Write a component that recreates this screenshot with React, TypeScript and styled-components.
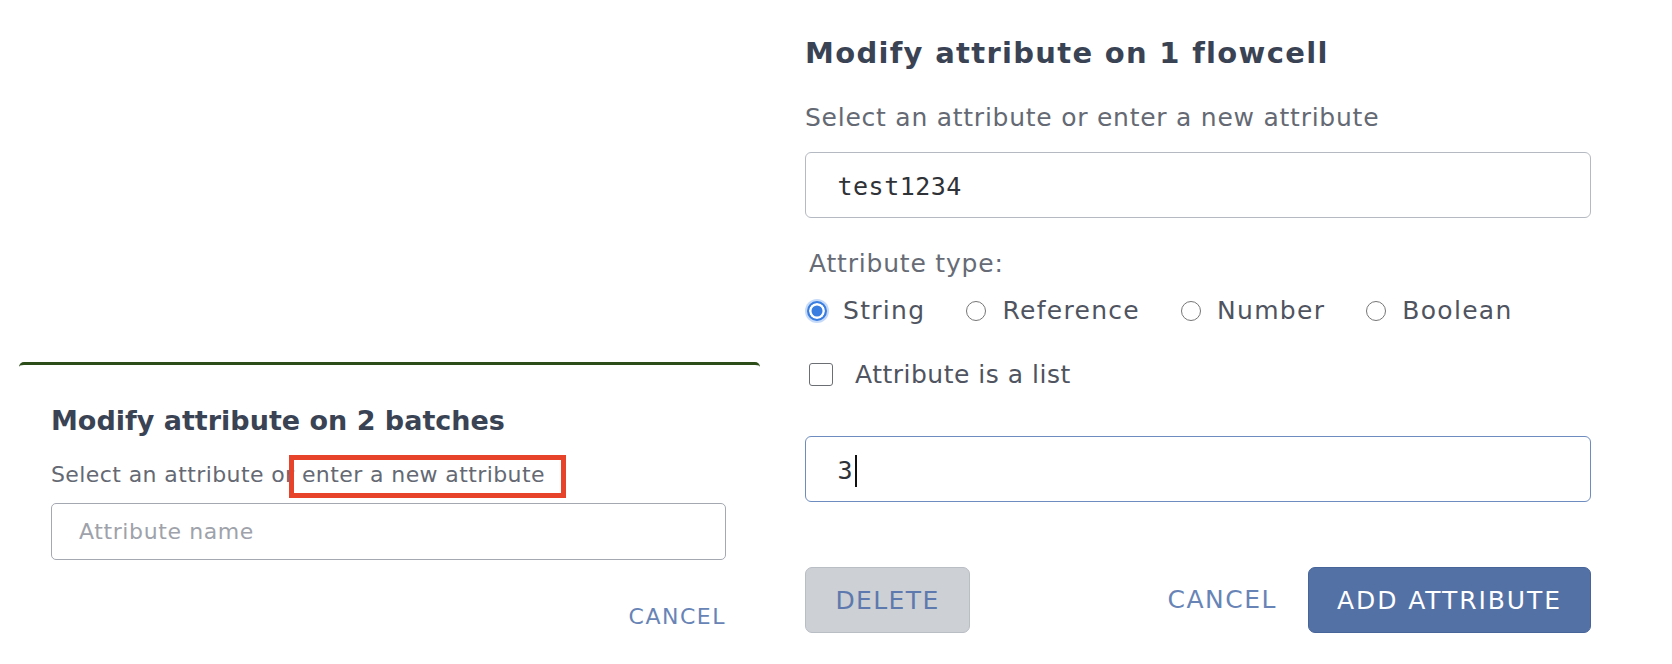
import React from "react";
import styled, { createGlobalStyle } from "styled-components";

const GlobalStyle = createGlobalStyle`
  html, body {
    margin: 0;
    padding: 0;
    background: #ffffff;
  }
  body {
    font-family: "DejaVu Sans", "Liberation Sans", sans-serif;
  }
  *, *::before, *::after {
    box-sizing: border-box;
  }
`;

const Page = styled.div`
  width: 1672px;
  height: 664px;
  display: flex;
  align-items: flex-start;
  gap: 45px;
  padding-left: 19px;
  overflow: hidden;
  background: #ffffff;
`;

/* ---------- left dialog (2 batches) ---------- */

const BatchDialog = styled.section`
  width: 741px;
  margin-top: 362px;
  border-top: 3px solid #2c4d17;
  border-radius: 5px 5px 0 0;
  padding: 39px 34px 20px 32px;
  display: flex;
  flex-direction: column;
`;

/* ---------- right dialog (1 flowcell) ---------- */

const FlowcellDialog = styled.section`
  width: 786px;
  padding-top: 35px;
  display: flex;
  flex-direction: column;
`;

const Title = styled.h2<{ $large?: boolean }>`
  margin: 0;
  font-family: "DejaVu Sans", sans-serif;
  font-weight: 700;
  color: #3a4354;
  font-size: ${(p) => (p.$large ? 29 : 27)}px;
  line-height: ${(p) => (p.$large ? 36 : 34)}px;
  letter-spacing: ${(p) => (p.$large ? 1.3 : 0)}px;
  white-space: nowrap;
`;

const Hint = styled.p<{ $large?: boolean }>`
  margin: ${(p) => (p.$large ? "31px 0 0" : "22px 0 0")};
  font-size: ${(p) => (p.$large ? 25 : 22)}px;
  line-height: ${(p) => (p.$large ? 32 : 30)}px;
  letter-spacing: ${(p) => (p.$large ? 0.75 : 0.4)}px;
  color: #646973;
  white-space: nowrap;
`;

const Highlight = styled.span`
  position: relative;
  &::after {
    content: "";
    position: absolute;
    left: -13px;
    right: -21px;
    top: -7px;
    bottom: -11px;
    border: 5px solid #e6432a;
    pointer-events: none;
  }
`;

const NameInput = styled.input`
  margin-top: 13px;
  width: 100%;
  height: 57px;
  border: 1.5px solid #a4a8b0;
  border-radius: 5px;
  padding: 0 0 0 27px;
  font-family: "DejaVu Sans", sans-serif;
  font-size: 22px;
  letter-spacing: 0.6px;
  color: #333;
  background: #fff;
  outline: none;
  &::placeholder {
    color: #9ea2aa;
  }
`;

const Field = styled.div<{ $focused?: boolean; $gap: number }>`
  margin-top: ${(p) => p.$gap}px;
  height: 66px;
  border: 1.5px solid ${(p) => (p.$focused ? "#6f8cc0" : "#b5b9c1")};
  border-radius: 6px;
  padding: 3px 0 0 31.5px;
  display: flex;
  align-items: center;
  font-family: "DejaVu Sans Mono", "Liberation Mono", monospace;
  font-size: 25px;
  letter-spacing: 0.5px;
  color: #2f3237;
  background: #fff;
`;

const Caret = styled.span`
  display: inline-block;
  width: 2px;
  height: 32px;
  margin-left: 1.5px;
  background: #111;
`;

const FieldLabel = styled.div`
  margin: 30px 0 0 4px;
  font-size: 25px;
  line-height: 32px;
  letter-spacing: 0.8px;
  color: #666b75;
`;

const OptionRow = styled.div`
  margin-top: 15px;
  padding-left: 2px;
  height: 32px;
  display: flex;
  align-items: center;
  gap: 41px;
`;

const Option = styled.label`
  display: flex;
  align-items: center;
  gap: 16px;
  font-size: 25px;
  line-height: 32px;
  letter-spacing: 1.3px;
  color: #4f5460;
`;

const RadioDot = styled.span<{ $checked?: boolean }>`
  width: 20px;
  height: 20px;
  flex: none;
  border-radius: 50%;
  border: ${(p) => (p.$checked ? "2px solid #3a7de0" : "1.5px solid #767676")};
  background: ${(p) => (p.$checked ? "#3a7de0" : "#fff")};
  box-shadow: ${(p) =>
    p.$checked
      ? "inset 0 0 0 2.5px #ffffff, 0 0 0 2px rgba(90, 150, 235, 0.35)"
      : "none"};
`;

const CheckRow = styled.label`
  margin-top: 31.5px;
  padding-left: 4px;
  height: 32px;
  display: flex;
  align-items: center;
  gap: 22px;
  font-size: 25px;
  letter-spacing: 0.5px;
  color: #4f5460;
`;

const CheckBox = styled.span`
  width: 24px;
  height: 23px;
  flex: none;
  border: 1.5px solid #6b6e73;
  border-radius: 3px;
  background: #fff;
`;

const Actions = styled.div<{ $large?: boolean }>`
  margin-top: ${(p) => (p.$large ? 65 : 42)}px;
  display: flex;
  align-items: center;
  justify-content: ${(p) => (p.$large ? "space-between" : "flex-end")};
`;

const ActionGroup = styled.div`
  display: flex;
  align-items: center;
  gap: 31px;
`;

const TextButton = styled.button<{ $large?: boolean }>`
  background: none;
  border: none;
  padding: 0;
  font-family: "DejaVu Sans", sans-serif;
  font-size: ${(p) => (p.$large ? 25 : 22)}px;
  line-height: 30px;
  letter-spacing: 1.5px;
  color: #6884b6;
  cursor: pointer;
`;

const FilledButton = styled.button<{ $kind: "muted" | "primary"; $width: number }>`
  width: ${(p) => p.$width}px;
  height: 66px;
  border-radius: 7px;
  border: 1px solid ${(p) => (p.$kind === "primary" ? "#48659a" : "#b9bdc4")};
  background: ${(p) => (p.$kind === "primary" ? "#5471a5" : "#cdd0d5")};
  color: ${(p) => (p.$kind === "primary" ? "#ffffff" : "#5d79ad")};
  font-family: "DejaVu Sans", sans-serif;
  font-size: 25px;
  letter-spacing: ${(p) => (p.$kind === "primary" ? 1.9 : 1.4)}px;
  padding: 0;
  cursor: pointer;
`;

const types = ["String", "Reference", "Number", "Boolean"];

export default function App() {
  return (
    <>
      <GlobalStyle />
      <Page>
        <BatchDialog>
          <Title>Modify attribute on 2 batches</Title>
          <Hint>
            Select an attribute or <Highlight>enter a new attribute</Highlight>
          </Hint>
          <NameInput placeholder="Attribute name" />
          <Actions>
            <TextButton>CANCEL</TextButton>
          </Actions>
        </BatchDialog>

        <FlowcellDialog>
          <Title $large>Modify attribute on 1 flowcell</Title>
          <Hint $large>Select an attribute or enter a new attribute</Hint>
          <Field $gap={18}>test1234</Field>
          <FieldLabel>Attribute type:</FieldLabel>
          <OptionRow>
            {types.map((t, i) => (
              <Option key={t}>
                <RadioDot $checked={i === 0} />
                {t}
              </Option>
            ))}
          </OptionRow>
          <CheckRow>
            <CheckBox />
            Attribute is a list
          </CheckRow>
          <Field $gap={45.5} $focused>
            3<Caret />
          </Field>
          <Actions $large>
            <FilledButton $kind="muted" $width={165}>
              DELETE
            </FilledButton>
            <ActionGroup>
              <TextButton $large>CANCEL</TextButton>
              <FilledButton $kind="primary" $width={283}>
                ADD ATTRIBUTE
              </FilledButton>
            </ActionGroup>
          </Actions>
        </FlowcellDialog>
      </Page>
    </>
  );
}
